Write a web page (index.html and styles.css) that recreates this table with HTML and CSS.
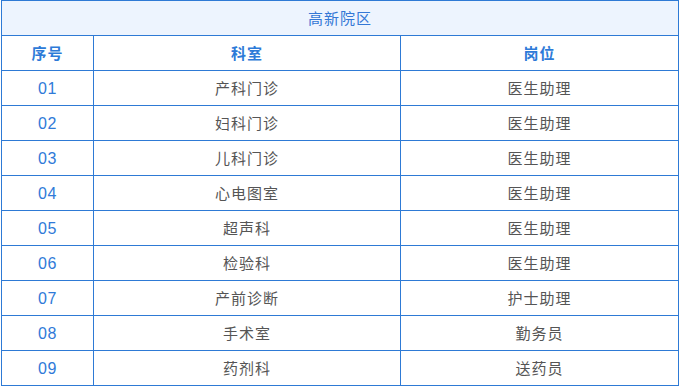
FILE: index.html
```html
<!DOCTYPE html>
<html lang="zh">
<head>
<meta charset="utf-8">
<link rel="stylesheet" href="styles.css">
</head>
<body>
<table class="jobs">
  <colgroup>
    <col class="c-no">
    <col class="c-dept">
    <col class="c-post">
  </colgroup>
  <thead>
    <tr><th colspan="3" class="title">高新院区</th></tr>
    <tr class="head"><th>序号</th><th>科室</th><th>岗位</th></tr>
  </thead>
  <tbody>
    <tr><td class="no">01</td><td>产科门诊</td><td>医生助理</td></tr>
    <tr><td class="no">02</td><td>妇科门诊</td><td>医生助理</td></tr>
    <tr><td class="no">03</td><td>儿科门诊</td><td>医生助理</td></tr>
    <tr><td class="no">04</td><td>心电图室</td><td>医生助理</td></tr>
    <tr><td class="no">05</td><td>超声科</td><td>医生助理</td></tr>
    <tr><td class="no">06</td><td>检验科</td><td>医生助理</td></tr>
    <tr><td class="no">07</td><td>产前诊断</td><td>护士助理</td></tr>
    <tr><td class="no">08</td><td>手术室</td><td>勤务员</td></tr>
    <tr><td class="no">09</td><td>药剂科</td><td>送药员</td></tr>
  </tbody>
</table>
</body>
</html>
```
FILE: styles.css
```css
html, body {
  margin: 0;
  padding: 0;
  background: #ffffff;
}
body {
  padding-left: 1px;
  font-family: "Noto Sans CJK SC", "Noto Sans", sans-serif;
}
.jobs {
  border-collapse: collapse;
  width: 677px;
  table-layout: fixed;
  font-size: 15px;
  letter-spacing: 1px;
}
.c-no { width: 92px; }
.c-dept { width: 307px; }
.c-post { width: 278px; }
.jobs th, .jobs td {
  border: 1px solid #2e7ad5;
  height: 34px;
  padding: 0;
  text-align: center;
  vertical-align: middle;
  line-height: 20px;
}
.jobs td {
  color: #555555;
}
.jobs .title {
  background: #edf4fe;
  color: #3478d6;
  font-weight: normal;
}
.jobs .head th {
  color: #2d7ad8;
  font-weight: bold;
}
.jobs td.no {
  color: #2f7ad8;
  font-family: "Liberation Sans", "Noto Sans CJK SC", sans-serif;
  font-size: 16px;
  letter-spacing: 0.5px;
  padding-top: 2px;
  height: 32px;
}
```
